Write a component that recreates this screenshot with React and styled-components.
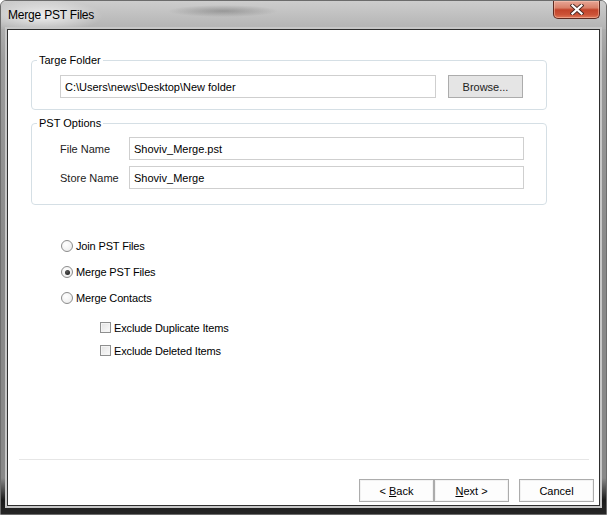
import React from 'react'
import styled, { createGlobalStyle } from 'styled-components'

const GlobalStyle = createGlobalStyle`
  html, body {
    margin: 0;
    padding: 0;
    background: #fff;
  }
  body {
    font-family: "Liberation Sans", Arial, sans-serif;
    font-size: 11px;
    color: #000;
    overflow: hidden;
  }
`

const App = () => {
    return (
        <>
            <GlobalStyle />
            <Window>
                <TitleBar>
                    <Title>Merge PST Files</Title>
                    <CloseButton>
                        <svg width="14" height="11" viewBox="0 0 14 11">
                            <path d="M2.5 1.5 L11.5 9.5 M11.5 1.5 L2.5 9.5" stroke="#4a2a24" strokeWidth="4" strokeLinecap="square" />
                            <path d="M2.5 1.5 L11.5 9.5 M11.5 1.5 L2.5 9.5" stroke="#fff" strokeWidth="2.2" strokeLinecap="square" />
                        </svg>
                    </CloseButton>
                </TitleBar>

                <Client>
                    <Groups>
                        <Group $top={24}>
                            <Legend>Targe Folder</Legend>
                            <FolderRow>
                                <TextBox $width={376}>C:\Users\news\Desktop\New folder</TextBox>
                                <Button $browse>Browse...</Button>
                            </FolderRow>
                        </Group>

                        <Group $top={7}>
                            <Legend>PST Options</Legend>
                            <FieldList>
                                <FieldRow>
                                    <FieldLabel>File Name</FieldLabel>
                                    <TextBox $width={395}>Shoviv_Merge.pst</TextBox>
                                </FieldRow>
                                <FieldRow>
                                    <FieldLabel>Store Name</FieldLabel>
                                    <TextBox $width={395}>Shoviv_Merge</TextBox>
                                </FieldRow>
                            </FieldList>
                        </Group>
                    </Groups>

                    <Options>
                        <OptionRow>
                            <Radio />
                            <span>Join PST Files</span>
                        </OptionRow>
                        <OptionRow>
                            <Radio $checked />
                            <span>Merge PST Files</span>
                        </OptionRow>
                        <OptionRow>
                            <Radio />
                            <span>Merge Contacts</span>
                        </OptionRow>
                        <CheckList>
                            <CheckRow>
                                <CheckBox />
                                <span>Exclude Duplicate Items</span>
                            </CheckRow>
                            <CheckRow>
                                <CheckBox />
                                <span>Exclude Deleted Items</span>
                            </CheckRow>
                        </CheckList>
                    </Options>

                    <Footer>
                        <Separator />
                        <ButtonBar>
                            <Button>{'< '}<u>B</u>ack</Button>
                            <Button><u>N</u>ext{' >'}</Button>
                            <Button $gap>Cancel</Button>
                        </ButtonBar>
                    </Footer>
                </Client>
            </Window>
        </>
    )
}

export default App


const Window = styled.div`
    box-sizing: border-box;
    width: 607px;
    height: 515px;
    display: flex;
    flex-direction: column;
    border: 1px solid #6c6c6c;
    border-radius: 6px 6px 0 0;
    overflow: hidden;
    background: linear-gradient(to bottom,
        #bcbcbc 0,
        #9c9c9c 60px,
        #898989 50%,
        #898989 calc(100% - 36px),
        #1a1a1a calc(100% - 14px),
        #262626 100%);
`

const TitleBar = styled.div`
    flex: none;
    height: 28px;
    display: flex;
    justify-content: space-between;
    align-items: flex-start;
    padding-left: 7px;
    background:
        radial-gradient(ellipse 60px 16px at 42px 15px, rgba(255, 255, 255, 0.75), rgba(255, 255, 255, 0)),
        radial-gradient(ellipse 55px 6px at 222px 10px, rgba(70, 70, 70, 0.35), rgba(70, 70, 70, 0)),
        linear-gradient(to bottom, #cdcdcd, #b3b3b3);
`

const Title = styled.div`
    margin-top: 7px;
    font-family: "Liberation Sans", Arial, sans-serif;
    font-size: 12px;
    line-height: 14px;
    letter-spacing: -0.2px;
    color: #000;
`

const CloseButton = styled.div`
    box-sizing: border-box;
    width: 47px;
    height: 18px;
    margin-right: 6px;
    display: flex;
    justify-content: center;
    align-items: center;
    border: 1px solid #5e2a20;
    border-top: none;
    border-radius: 0 0 5px 5px;
    background: linear-gradient(to bottom, #e7a696 0%, #d98069 40%, #c2432a 52%, #cc5337 80%, #e0785a 100%);
    box-shadow: inset 0 0 0 1px rgba(255, 210, 190, 0.45);
`

const Client = styled.div`
    flex: 1;
    display: flex;
    flex-direction: column;
    margin: 0 6px 8px;
    background: #fff;
    border: 1px solid #2e2e2e;
    box-shadow: 0 0 0 2px #c7c7c7;
`

const Groups = styled.div`
    padding: 0 52px 0 23px;
`

const Group = styled.fieldset`
    margin: ${p => p.$top}px 0 0;
    padding: 0;
    min-width: 0;
    border: 1px solid #d5dfe5;
    border-radius: 4px;
`

const Legend = styled.legend`
    margin-left: 5px;
    padding: 0 2px;
    font-size: 11px;
    line-height: 13px;
    color: #000;
`

const FolderRow = styled.div`
    display: flex;
    align-items: center;
    gap: 12px;
    padding: 8px 22px 11px 28px;
`

const FieldList = styled.div`
    display: flex;
    flex-direction: column;
    gap: 6px;
    padding: 7px 21px 15px 28px;
`

const FieldRow = styled.div`
    display: flex;
    align-items: center;
`

const FieldLabel = styled.div`
    width: 69px;
    color: #222;
`

const TextBox = styled.div`
    box-sizing: border-box;
    width: ${p => p.$width}px;
    height: 23px;
    display: flex;
    align-items: center;
    padding-left: 4px;
    border: 1px solid #cfcfcf;
    background: #fff;
    color: #000;
    white-space: nowrap;
`

const Button = styled.div`
    box-sizing: border-box;
    width: 75px;
    height: 23px;
    display: flex;
    justify-content: center;
    align-items: center;
    white-space: pre;
    margin-left: ${p => p.$gap ? '10px' : '0'};
    border: 1px solid #acacac;
    background: ${p => p.$browse ? '#e5e5e5' : '#fdfdfd'};
    box-shadow: ${p => p.$browse ? 'none' : 'inset 0 0 0 1px #f2f2f2'};
    color: ${p => p.$browse ? '#222' : '#000'};

    u {
        text-underline-offset: 1px;
    }
`

const Options = styled.div`
    margin: 28px 0 0 53px;
    letter-spacing: -0.15px;
`

const OptionRow = styled.div`
    height: 26px;
    display: flex;
    align-items: center;
    gap: 3px;
    color: #000;
`

const Radio = styled.span`
    box-sizing: border-box;
    position: relative;
    width: 12px;
    height: 12px;
    border-radius: 50%;
    border: 1px solid #8c8c8c;
    background: radial-gradient(circle at 40% 35%, #ffffff, #e9e9e9);

    &::after {
        content: '';
        display: ${p => p.$checked ? 'block' : 'none'};
        position: absolute;
        left: 2.5px;
        top: 2.5px;
        width: 5px;
        height: 5px;
        border-radius: 50%;
        background: radial-gradient(circle at 40% 35%, #5a5a5a, #111);
    }
`

const CheckList = styled.div`
    margin: 5px 0 0 39px;
`

const CheckRow = styled.div`
    height: 23px;
    display: flex;
    align-items: center;
    gap: 3px;
    color: #000;
`

const CheckBox = styled.span`
    box-sizing: border-box;
    width: 11px;
    height: 11px;
    border: 1px solid #8e8f8f;
    background: linear-gradient(135deg, #e2e2e2, #fbfbfb);
    box-shadow: inset 0 0 0 1px #f4f4f4;
`

const Footer = styled.div`
    margin-top: auto;
`

const Separator = styled.div`
    height: 1px;
    margin: 0 10px 0 11px;
    background: #e6e6e6;
`

const ButtonBar = styled.div`
    display: flex;
    justify-content: flex-end;
    padding: 19px 5px 3px 0;
`
